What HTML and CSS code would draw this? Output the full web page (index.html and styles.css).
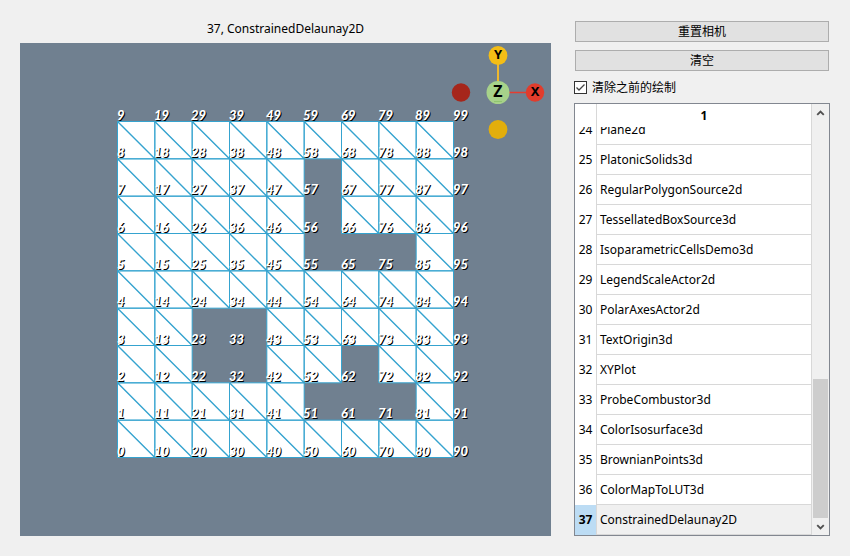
FILE: index.html
```html
<!DOCTYPE html>
<html lang="zh-CN">
<head>
<meta charset="utf-8">
<title>ConstrainedDelaunay2D</title>
<link rel="stylesheet" href="styles.css">
</head>
<body>
<main class="window">
  <section class="view">
    <h1 class="view-title">37, ConstrainedDelaunay2D</h1>
    <svg class="scene" viewBox="0 0 531 493" role="img" aria-label="ConstrainedDelaunay2D">
      <g id="mesh"></g>
      <g id="labels" class="point-labels"></g>
      <g class="axes">
        <circle cx="441" cy="49.500" r="9.200" fill="#a6261b"/>
        <circle cx="478" cy="86.500" r="9.400" fill="#e2ae0c"/>
        <path d="M478 20V45" stroke="#efb82d" stroke-width="2"/>
        <path d="M485 49.500H510" stroke="#e53d30" stroke-width="1.500"/>
        <circle cx="478" cy="12.500" r="9.400" fill="#f4bd16"/>
        <circle cx="515" cy="49.500" r="9.200" fill="#e13c2c"/>
        <circle cx="478" cy="49.500" r="11.500" fill="#a7d28a"/>
        <path d="M474 58.500H482" stroke="#8fc56f"/>
        <text class="axis" x="478" y="16">Y</text>
        <text class="axis" x="515" y="53">X</text>
        <text class="axis axis-front" x="478" y="54">Z</text>
      </g>
    </svg>
  </section>
  <aside class="panel">
    <button class="button" type="button">重置相机</button>
    <button class="button" type="button">清空</button>
    <label class="option"><input class="check" type="checkbox" checked>清除之前的绘制</label>
    <div class="list">
      <div class="rows" id="rows">
        <table class="table">
          <thead><tr><th class="corner"></th><th class="column">1</th></tr></thead>
          <tbody>
            <tr><th>24</th><td>Plane2d</td></tr>
            <tr><th>25</th><td>PlatonicSolids3d</td></tr>
            <tr><th>26</th><td>RegularPolygonSource2d</td></tr>
            <tr><th>27</th><td>TessellatedBoxSource3d</td></tr>
            <tr><th>28</th><td>IsoparametricCellsDemo3d</td></tr>
            <tr><th>29</th><td>LegendScaleActor2d</td></tr>
            <tr><th>30</th><td>PolarAxesActor2d</td></tr>
            <tr><th>31</th><td>TextOrigin3d</td></tr>
            <tr><th>32</th><td>XYPlot</td></tr>
            <tr><th>33</th><td>ProbeCombustor3d</td></tr>
            <tr><th>34</th><td>ColorIsosurface3d</td></tr>
            <tr><th>35</th><td>BrownianPoints3d</td></tr>
            <tr><th>36</th><td>ColorMapToLUT3d</td></tr>
            <tr class="selected"><th>37</th><td>ConstrainedDelaunay2D</td></tr>
          </tbody>
        </table>
      </div>
      <div class="scrollbar" aria-hidden="true">
        <svg class="arrow" viewBox="0 0 16 17"><path d="M4.500 11L8 7.500L11.500 11"/></svg>
        <div class="track"><div class="thumb"></div></div>
        <svg class="arrow" viewBox="0 0 16 17"><path d="M4.500 7L8 10.500L11.500 7"/></svg>
      </div>
    </div>
  </aside>
</main>
<script src="script.js"></script>
</body>
</html>
```
FILE: styles.css
```css
* { box-sizing: border-box; }

body {
  margin: 0;
  background: #f0f0f0;
  color: #000;
  font: 12px/16px "Noto Sans", "Noto Sans CJK SC", sans-serif;
}

.window {
  display: grid;
  grid-template-columns: minmax(0, 1fr) 256px;
  gap: 23px;
  height: 100vh;
  padding: 20px;
}

.view {
  display: flex;
  flex-direction: column;
  min-height: 0;
}

.view-title {
  margin: 0;
  height: 23px;
  font-size: 12px;
  line-height: 18px;
  font-weight: 400;
  text-align: center;
}

.scene {
  flex: 1;
  width: 100%;
  min-height: 0;
  background: #708090;
}

.cell { fill: #fff; }

.edge,
.diagonal {
  fill: none;
  stroke: #35a3cf;
  stroke-width: 1;
}

.diagonal { stroke-width: 1.4; }

.point-labels {
  fill: #fff;
  font: italic 900 13px Lato, sans-serif;
}

.shadow { fill: #000; }

.axis {
  font: 700 13px "Noto Sans", sans-serif;
  text-anchor: middle;
}

.axis-front { font-size: 16px; }

.panel {
  display: flex;
  flex-direction: column;
  min-height: 0;
  padding-top: 1px;
}

.button {
  height: 21px;
  margin: 0 1px 8px;
  padding: 0 0 2px;
  border: 1px solid #adadad;
  background: #e1e1e1;
  color: #000;
  font: 12px/16px "Noto Sans CJK SC", sans-serif;
}

.option {
  display: flex;
  align-items: center;
  gap: 5px;
  height: 16px;
  margin-bottom: 8px;
  font-family: "Noto Sans CJK SC", sans-serif;
}

.check {
  appearance: none;
  width: 13px;
  height: 13px;
  margin: 0;
  border: 1px solid #333;
  background: #fff;
}

.check:checked {
  background: #fff url("data:image/svg+xml,%3Csvg xmlns='http://www.w3.org/2000/svg' viewBox='0 0 11 11'%3E%3Cpath d='M1.500 5.500L4 8L9.500 2.500' fill='none' stroke='%23444' stroke-width='1.300'/%3E%3C/svg%3E");
}

.list {
  display: flex;
  flex: 1;
  min-height: 0;
  border: 1px solid #828790;
  background: #fff;
}

.rows {
  flex: 1;
  overflow-y: auto;
  scrollbar-width: none;
}

.table {
  width: 100%;
  border-collapse: separate;
  border-spacing: 0;
  table-layout: fixed;
}

.table th,
.table td {
  height: 30px;
  padding: 0 0 0 3px;
  border-right: 1px solid #d8d8d8;
  border-bottom: 1px solid #d8d8d8;
  font-weight: 400;
  text-align: left;
}

.table tbody th {
  padding: 0;
  border-bottom: 0;
  text-align: center;
}

.table thead th {
  position: sticky;
  top: 0;
  height: 23px;
  padding: 0;
  border-bottom: 0;
  background: #fff;
  font-weight: 700;
  text-align: center;
}

.table .corner { width: 22px; }

.table .selected th {
  background: #bcdcf4;
  font-weight: 700;
}

.table .selected td { background: #f0f0f0; }

.scrollbar {
  display: flex;
  flex-direction: column;
  width: 17px;
  padding: 0 1px;
  background: #f0f0f0;
}

.arrow {
  width: 100%;
  height: 17px;
  fill: none;
  stroke: #505050;
  stroke-width: 2;
}

.track {
  display: flex;
  flex: 1;
  flex-direction: column;
  justify-content: flex-end;
}

.thumb {
  height: 35%;
  background: #cdcdcd;
}
```
FILE: script.js
```js
const SVG = "http://www.w3.org/2000/svg";
const LEFT = 97.5;
const TOP = 78.5;
const STEP = 112 / 3;
const SIZE = 10;

// Cells cut out by the constraint polygons, as "column,row" from the top left.
const holes = new Set([
  "5,1", "5,2", "5,3", "6,3", "7,3",
  "2,5", "3,5", "2,6", "3,6",
  "6,6", "5,7", "6,7", "7,7"
]);

function add(parent, tag, attributes, text) {
  const node = document.createElementNS(SVG, tag);
  for (const [name, value] of Object.entries(attributes)) node.setAttribute(name, value);
  if (text !== undefined) node.textContent = text;
  parent.append(node);
}

const mesh = document.getElementById("mesh");
const labels = document.getElementById("labels");
let squares = "";
let diagonals = "";

for (let column = 0; column < SIZE - 1; column++) {
  for (let row = 0; row < SIZE - 1; row++) {
    if (holes.has(`${column},${row}`)) continue;
    const x = LEFT + column * STEP;
    const y = TOP + row * STEP;
    squares += `M${x} ${y}h${STEP}v${STEP}h${-STEP}z`;
    diagonals += `M${x} ${y}l${STEP} ${STEP}`;
  }
}
add(mesh, "path", { class: "cell", d: squares });
add(mesh, "path", { class: "edge", d: squares });
add(mesh, "path", { class: "diagonal", d: diagonals });

for (let column = 0; column < SIZE; column++) {
  for (let row = 0; row < SIZE; row++) {
    const x = Math.round(LEFT + column * STEP - 1);
    const y = Math.round(TOP + (SIZE - 1 - row) * STEP - 2);
    const value = column * 10 + row;
    add(labels, "text", { class: "shadow", x: x + 1, y: y + 1 }, value);
    add(labels, "text", { x, y }, value);
  }
}

const rows = document.getElementById("rows");
rows.scrollTop = rows.scrollHeight;
```
